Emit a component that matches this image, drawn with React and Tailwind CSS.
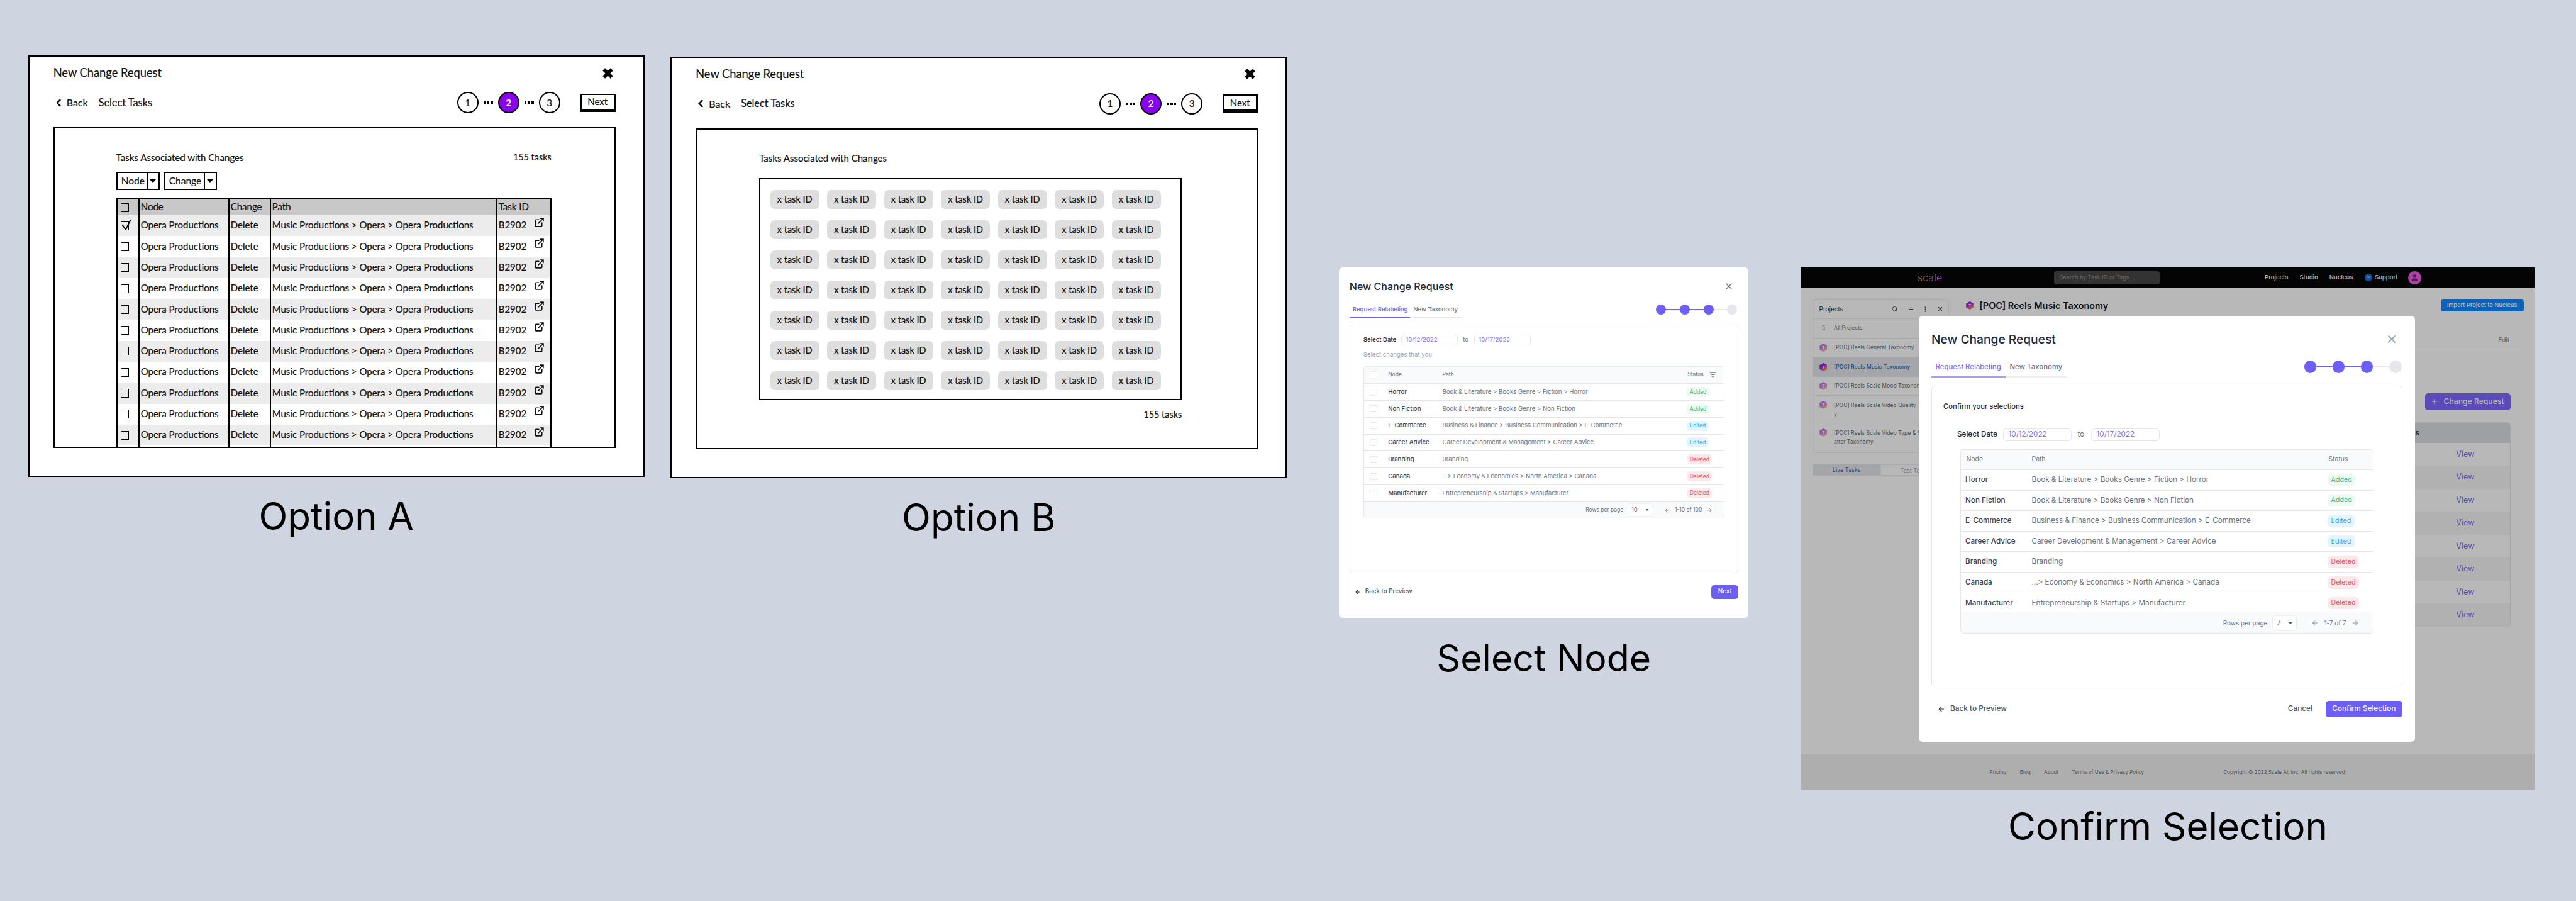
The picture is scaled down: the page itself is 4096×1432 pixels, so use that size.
import React from "react";
import { ArrowLeft, ArrowRight, ExternalLink, ListFilter, MoreVertical, Plus, Search, User, X } from "lucide-react";

const chips = Array.from({ length: 49 }, (_, i) => i);
const wireRows = Array.from({ length: 11 }, (_, i) => i);
const changes = [
  ["Horror", "Book & Literature > Books Genre > Fiction > Horror", "Added"],
  ["Non Fiction", "Book & Literature > Books Genre > Non Fiction", "Added"],
  ["E-Commerce", "Business & Finance > Business Communication > E-Commerce", "Edited"],
  ["Career Advice", "Career Development & Management > Career Advice", "Edited"],
  ["Branding", "Branding", "Deleted"],
  ["Canada", "...> Economy & Economics > North America > Canada", "Deleted"],
  ["Manufacturer", "Entrepreneurship & Startups > Manufacturer", "Deleted"],
];
const badgeColors = {
  Added: "bg-[#edf9f1] text-[#52b27e]",
  Edited: "bg-[#e2f5fe] text-[#38a8ea]",
  Deleted: "bg-[#fde8ea] text-[#ee4f62]",
};

function WireDots() {
  return (
    <span className="flex w-[15px] gap-[2px]">
      <span className="h-[4px] w-[4px] bg-black" />
      <span className="h-[4px] w-[4px] bg-black" />
      <span className="h-[4px] w-[4px] bg-black" />
    </span>
  );
}

function WireStep({ n, on }) {
  return (
    <span className={on
      ? "flex h-[34px] w-[34px] items-center justify-center rounded-full border-2 border-black bg-[#8a00f0] text-[15px] font-bold text-white [-webkit-text-stroke:0]"
      : "flex h-[34px] w-[34px] items-center justify-center rounded-full border-2 border-black bg-white text-[15px]"}>
      {n}
    </span>
  );
}

function WireHeader() {
  return (
    <>
      <div className="flex h-6 items-center justify-between pt-0">
        <span className="text-[18.3px]">New Change Request</span>
        <svg viewBox="0 0 24 24" className="mr-[3px] h-[19px] w-[19px]" fill="none" stroke="black" strokeWidth="7">
          <path d="M4 4 20 20M20 4 4 20" />
        </svg>
      </div>
      <div className="mt-[17px] flex h-9 items-center">
        <svg viewBox="0 0 10 16" className="ml-1 h-[17px] w-[9px]" fill="none" stroke="black" strokeWidth="2.6">
          <path d="M8 2 2 8l6 6" />
        </svg>
        <span className="ml-[8px] text-[16px]">Back</span>
        <span className="ml-[17px] text-[16.3px]">Select Tasks</span>
        <div className="ml-auto flex items-center gap-[8px]">
          <WireStep n="1" />
          <WireDots />
          <WireStep n="2" on />
          <WireDots />
          <WireStep n="3" />
        </div>
        <span className="ml-[32px] flex h-[29px] w-[56px] items-center justify-center border-2 border-r-[3px] border-b-[5px] border-black text-[15px]">Next</span>
      </div>
    </>
  );
}

function WireFrame({ children }) {
  return (
    <div className="flex h-[670px] w-[980px] flex-col border-2 border-black bg-white pt-[14px] pr-[44px] pl-[38px] font-[Lato,sans-serif] text-[#111] [-webkit-text-stroke:0.2px_#111]">
      <WireHeader />
      <div className="mt-[21px] flex h-[510px] flex-col border-2 border-black">{children}</div>
    </div>
  );
}

function WireCheck({ checked }) {
  return (
    <span className="relative h-[14px] w-[13px] border-[1.5px] border-black">
      {checked && (
        <svg viewBox="0 0 16 16" className="absolute -top-[5px] -left-[1px] h-[18px] w-[18px]" fill="none" stroke="black" strokeWidth="1.8">
          <path d="M2 8l5 7 7-14" />
        </svg>
      )}
    </span>
  );
}

function OptionA() {
  return (
    <WireFrame>
      <div className="flex min-h-0 flex-1 flex-col pt-[36px] pl-[98px]">
        <div className="flex h-5 w-[692px] items-center justify-between text-[15px]">
          <span>Tasks Associated with Changes</span>
          <span className="text-[14.4px]">155 tasks</span>
        </div>
        <div className="mt-[13px] flex gap-[7px] text-[15.5px]">
          <div className="flex h-[29px] w-[69px] border-2 border-black">
            <span className="flex-1 pl-[6px] leading-[25px]">Node</span>
            <span className="flex w-[19px] items-center justify-center border-l-2 border-black">
              <span className="border-x-[5px] border-t-[6px] border-x-transparent border-t-black" />
            </span>
          </div>
          <div className="flex h-[29px] w-[84px] border-2 border-black">
            <span className="flex-1 pl-[6px] leading-[25px]">Change</span>
            <span className="flex w-[19px] items-center justify-center border-l-2 border-black">
              <span className="border-x-[5px] border-t-[6px] border-x-transparent border-t-black" />
            </span>
          </div>
        </div>
        <div className="mt-[13px] flex w-[692px] flex-1 flex-col border-x-2 border-t-2 border-black text-[15px]">
          <div className="grid h-[25px] grid-cols-[35px_143px_66px_360px_1fr] bg-[#c8c8c8]">
            <div className="flex items-center border-r-2 border-black pl-[5px]"><WireCheck /></div>
            <div className="border-r-2 border-black pl-[2px] leading-[23px]">Node</div>
            <div className="border-r-2 border-black pl-[2px] leading-[23px]">Change</div>
            <div className="border-r-2 border-black pl-[2px] leading-[23px]">Path</div>
            <div className="pl-[2px] leading-[23px]">Task ID</div>
          </div>
          {wireRows.map((i) => (
            <div key={i} className={i % 2 === 0
              ? "grid h-[33.3px] grid-cols-[35px_143px_66px_360px_1fr] bg-[#ececec]"
              : "grid h-[33.3px] grid-cols-[35px_143px_66px_360px_1fr] bg-white"}>
              <div className="flex items-center border-r-2 border-black pl-[5px]"><WireCheck checked={i === 0} /></div>
              <div className="flex items-center border-r-2 border-black pb-[2px] pl-[2px]">Opera Productions</div>
              <div className="flex items-center border-r-2 border-black pb-[2px] pl-[2px]">Delete</div>
              <div className="flex items-center border-r-2 border-black pb-[2px] pl-[2px]">Music Productions &gt; Opera &gt; Opera Productions</div>
              <div className="flex items-center justify-between pr-[9px] pb-[2px] pl-[2px]">
                <span>B2902</span>
                <ExternalLink className="mb-[9px] h-[17px] w-[17px]" strokeWidth={2.4} />
              </div>
            </div>
          ))}
          <div className="grid flex-1 grid-cols-[35px_143px_66px_360px_1fr]">
            <div className="border-r-2 border-black" />
            <div className="border-r-2 border-black" />
            <div className="border-r-2 border-black" />
            <div className="border-r-2 border-black" />
            <div />
          </div>
        </div>
      </div>
    </WireFrame>
  );
}

function OptionB() {
  return (
    <WireFrame>
      <div className="flex flex-col pt-[36px] pl-[99px]">
        <div className="flex h-5 items-center text-[15px]">Tasks Associated with Changes</div>
        <div className="mt-[21px] grid h-[353px] w-[672px] grid-cols-[repeat(7,78px)] content-start gap-x-[12.5px] gap-y-[18px] border-2 border-black pt-[17.5px] pl-[15.5px]">
          {chips.map((i) => (
            <span key={i} className="flex h-[30px] items-center justify-center rounded-[7px] bg-[#dedede] text-[14.5px]">x task ID</span>
          ))}
        </div>
        <div className="mt-[13px] flex h-5 w-[672px] items-center justify-end text-[14.4px]">155 tasks</div>
      </div>
    </WireFrame>
  );
}

function Stepper({ dot, line, className }) {
  return (
    <div className={className}>
      <span className={`${dot} bg-[#6c5ef7]`} />
      <span className={`${line} bg-[#6c5ef7]`} />
      <span className={`${dot} bg-[#6c5ef7]`} />
      <span className={`${line} bg-[#6c5ef7]`} />
      <span className={`${dot} bg-[#6c5ef7]`} />
      <span className={`${line} bg-[#e5e7eb]`} />
      <span className={`${dot} bg-[#e5e7eb]`} />
    </div>
  );
}

function SelectNode() {
  return (
    <div className="flex h-[557px] w-[651px] flex-col rounded-[6px] bg-white pt-[18px] pr-[16px] pl-[16.5px] font-[Inter,sans-serif]">
      <div className="flex h-6 items-center justify-between">
        <span className="text-[16px] font-medium text-[#1f2937]">New Change Request</span>
        <X className="mr-[7px] h-[16px] w-[16px] text-[#6b7280]" strokeWidth={2} />
      </div>
      <div className="mt-[13.5px] flex items-center justify-between">
        <div className="flex h-[24px] text-[9.6px] font-medium">
          <span className="w-[96px] border-b-[1.5px] border-[#6c5ef7] pl-[5px] leading-[22px] text-[#6c5ef7]">Request Relabeling</span>
          <span className="w-[81px] border-b-[1.5px] border-[#e5e7eb] pl-[5.5px] leading-[22px] text-[#6b7280]">New Taxonomy</span>
        </div>
        <Stepper className="mr-[2px] mb-[2px] flex items-center" dot="h-4 w-4 rounded-full" line="h-[2px] w-[21.7px]" />
      </div>
      <div className="mt-[11.5px] h-[394.5px] rounded-[6px] border border-[#e5e7eb] pt-[15px] pr-[21px] pl-[21px]">
        <div className="flex h-[16.5px] items-center text-[9.6px]">
          <span className="w-[60.5px] font-medium text-[#1f2937]">Select Date</span>
          <span className="flex h-[16.5px] w-[90px] items-center rounded-[4px] border border-[#e5e7eb] pl-[6px] text-[#7f74f0]">10/12/2022</span>
          <span className="ml-[8px] w-[18px] text-[#6b7280]">to</span>
          <span className="flex h-[16.5px] w-[89.5px] items-center rounded-[4px] border border-[#e5e7eb] pl-[6px] text-[#7f74f0]">10/17/2022</span>
        </div>
        <div className="mt-[7px] h-4 text-[9.6px] leading-4 text-[#9ca3af]">Select changes that you</div>
        <div className="mt-[10px] overflow-hidden rounded-[4px] border border-[#e5e7eb] text-[9.6px]">
          <div className="grid h-[26.7px] grid-cols-[38.4px_86.3px_388.8px_1fr] items-center bg-[#f9fafb] text-[8.5px] text-[#6b7280]">
            <span className="ml-[9px] h-[11px] w-[12px] rounded-[2px] border border-[#e5e7eb] bg-white" />
            <span>Node</span>
            <span>Path</span>
            <span className="flex items-center pl-[1px]">Status<ListFilter className="ml-[9px] h-[11px] w-[11px]" strokeWidth={2} /></span>
          </div>
          {changes.map(([node, path, status]) => (
            <div key={node} className="grid h-[26.8px] grid-cols-[38.4px_86.3px_388.8px_1fr] items-center border-t border-[#e5e7eb] bg-white">
              <span className="ml-[9px] h-[11px] w-[12px] rounded-[2px] border border-[#e5e7eb]" />
              <span className="font-medium text-[#374151]">{node}</span>
              <span className="text-[#6b7280]">{path}</span>
              <span><span className={`inline-flex h-[16px] items-center rounded-[6px] px-[4.6px] text-[8.5px] ${badgeColors[status]}`}>{status}</span></span>
            </div>
          ))}
          <div className="flex h-[26.7px] items-center justify-end border-t border-[#e5e7eb] bg-[#f9fafb] pr-[18px] text-[8.5px] text-[#6b7280]">
            <span>Rows per page</span>
            <span className="ml-[6.6px] flex h-[21px] w-[39px] items-center justify-between rounded-[4px] border border-[#eceef1] bg-white px-[5px] text-[9.6px]">10<span className="border-x-[2.5px] border-t-[3px] border-x-transparent border-t-[#4b5563]" /></span>
            <ArrowLeft className="ml-[19px] h-[10px] w-[10px]" strokeWidth={1.6} />
            <span className="mx-[7px]">1-10 of 100</span>
            <ArrowRight className="h-[10px] w-[10px]" strokeWidth={1.6} />
          </div>
        </div>
      </div>
      <div className="mt-[19px] flex items-center justify-between">
        <span className="flex items-center pl-[8px] text-[9.8px] font-medium text-[#4b5563]">
          <ArrowLeft className="mr-[7px] h-[10px] w-[10px] text-[#1f2937]" strokeWidth={2.4} />Back to Preview
        </span>
        <span className="flex h-[22px] w-[43px] items-center justify-center rounded-[5px] bg-[#6c5ef7] text-[9.8px] font-medium text-white">Next</span>
      </div>
    </div>
  );
}

function Hex({ bright, id }) {
  return (
    <svg viewBox="0 0 24 26" className={bright ? "h-[13px] w-[12.5px] shrink-0" : "h-[13px] w-[12.5px] shrink-0 opacity-60"}>
      <defs>
        <linearGradient id={id} x1="0" y1="0" x2="0.6" y2="1">
          <stop offset="0" stopColor="#5a22e8" />
          <stop offset="0.55" stopColor="#b02fd8" />
          <stop offset="1" stopColor="#f59a3c" />
        </linearGradient>
      </defs>
      <polygon points="12,0 24,6.5 24,19.5 12,26 0,19.5 0,6.5" fill={`url(#${id})`} />
      <text x="12" y="18" textAnchor="middle" fontSize="13" fontWeight="700" fill="#fff" fontFamily="Inter">T</text>
    </svg>
  );
}

function Sidebar() {
  return (
    <div className="w-[216.5px] shrink-0 text-[8.6px]">
      <div className="rounded-[4px] border border-[#eceef1] bg-white text-[#6b7280]">
        <div className="flex h-[30.6px] items-center border-b border-[#eceef1] pr-[8px] pl-[9.5px] text-[10px] text-[#1f2937]">
          <span>Projects</span>
          <Search className="ml-auto h-[10px] w-[10px] text-[#4b5563]" strokeWidth={2.4} />
          <Plus className="ml-[15px] h-[11px] w-[11px] text-[#4b5563]" strokeWidth={2.4} />
          <MoreVertical className="ml-[12px] h-[11px] w-[11px] text-[#4b5563]" strokeWidth={2.8} />
          <X className="ml-[13px] h-[10px] w-[10px] text-[#4b5563]" strokeWidth={3} />
        </div>
        <div className="flex h-[30.6px] items-center border-b border-[#eceef1] pl-[14px]">
          <span className="w-[19px] text-[#9ca3af]">5</span>All Projects
        </div>
        <div className="flex h-[30.6px] items-center gap-[11px] border-b border-[#eceef1] pl-[9.5px]">
          <Hex id="hx1" />[POC] Reels General Taxonomy
        </div>
        <div className="flex h-[30.6px] items-center gap-[11px] bg-[#e5e7eb] pl-[9.5px] font-medium text-[#1f6fd8]">
          <Hex id="hx2" bright />[POC] Reels Music Taxonomy
        </div>
        <div className="flex h-[30.6px] items-center gap-[11px] border-b border-[#eceef1] pl-[9.5px]">
          <Hex id="hx3" />[POC] Reels Scale Mood Taxonomy
        </div>
        <div className="flex h-[44px] items-start gap-[11px] border-b border-[#eceef1] pt-[8px] pl-[9.5px] leading-[14px]">
          <Hex id="hx4" /><span>[POC] Reels Scale Video Quality Taxonom<br />y</span>
        </div>
        <div className="flex h-[46px] items-start gap-[11px] pt-[8px] pl-[9.5px] leading-[14px]">
          <Hex id="hx5" /><span>[POC] Reels Scale Video Type &amp; Subject M<br />atter Taxonomy</span>
        </div>
      </div>
      <div className="mt-[18px] flex h-[18px] text-[9px] leading-[18px]">
        <span className="w-1/2 rounded-l-[3px] bg-[#e5e7eb] text-center text-[#1f6fd8]">Live Tasks</span>
        <span className="w-1/2 rounded-r-[3px] border border-[#eceef1] text-center text-[#9ca3af]">Test Tasks</span>
      </div>
    </div>
  );
}

function ProjectMain() {
  return (
    <div className="ml-[27.5px] flex min-w-0 flex-1 flex-col pr-[18px]">
      <div className="flex h-[19.6px] items-center justify-between">
        <span className="flex items-center gap-[9px] text-[14.4px] font-semibold text-[#111827]">
          <Hex id="hx6" bright />[POC] Reels Music Taxonomy
        </span>
        <span className="flex h-[19.6px] w-[132px] items-center justify-center rounded-[4px] bg-[#0e8aff] text-[9.2px] font-medium text-white">Import Project to Nucleus</span>
      </div>
      <div className="mr-[3px] flex h-[62px] items-end justify-end border-b border-[#e5e7eb] pr-[19.5px] pb-[8px] text-[10px] text-[#6b7280]">Edit</div>
      <span className="mt-[68px] mr-[21px] flex h-[26.7px] w-[136px] items-center justify-center gap-[8px] self-end rounded-[5px] bg-[#7e68ff] text-[12.2px] font-medium text-white">
        <Plus className="h-[12px] w-[12px]" strokeWidth={2.4} />Change Request
      </span>
      <div className="mt-[19px] mr-[21px] overflow-hidden rounded-[6px] border border-[#e5e7eb] text-[12.6px]">
        <div className="grid h-[32px] grid-cols-[720px_1fr] items-center bg-[#dcdee2] text-[#1f2937]">
          <span className="text-right text-[12px] font-medium">Actions</span>
          <span />
        </div>
        {wireRows.slice(0, 8).map((i) => (
          <div key={i} className={i % 2 === 0
            ? "flex h-[36.5px] items-center justify-end bg-white pr-[56px] text-[#7c6ff5]"
            : "flex h-[36.5px] items-center justify-end bg-[#f6f6f6] pr-[56px] text-[#7c6ff5]"}>View</div>
        ))}
      </div>
    </div>
  );
}

function ConfirmModal() {
  return (
    <div className="absolute top-[77px] left-[187px] flex h-[676.5px] w-[789px] flex-col rounded-[6px] bg-white pt-[23px] pr-[19.5px] pl-[20.5px]">
      <div className="flex h-7 items-center justify-between">
        <span className="text-[19.2px] font-medium text-[#1f2937]">New Change Request</span>
        <X className="mr-[7px] h-[20px] w-[20px] text-[#9ca3af]" strokeWidth={2.2} />
      </div>
      <div className="mt-[15px] flex items-center justify-between">
        <div className="flex h-[31.5px] text-[11.4px] font-medium">
          <span className="w-[118px] border-b-2 border-[#ab9fe6] pl-[6.5px] leading-[30px] text-[#7c6ff0]">Request Relabeling</span>
          <span className="w-[97px] border-b-2 border-[#eeeeef] pl-[6.5px] leading-[30px] text-[#6b7280]">New Taxonomy</span>
        </div>
        <Stepper className="mr-[1.5px] mb-[2px] flex items-center" dot="h-[19.6px] w-[19.6px] rounded-full" line="h-[2px] w-[25.5px]" />
      </div>
      <div className="mt-[13.5px] h-[477.5px] rounded-[6px] border border-[#e5e7eb] pt-[24px]">
        <div className="h-4 pl-[18px] text-[11.2px] leading-4 font-medium text-[#1f2937]">Confirm your selections</div>
        <div className="mt-[27px] flex h-[19.6px] items-center pl-[40px] text-[11.7px]">
          <span className="w-[72.5px] font-medium text-[#1f2937]">Select Date</span>
          <span className="flex h-[19.6px] w-[109px] items-center rounded-[5px] border border-[#e5e7eb] pl-[8px] text-[#7f74f0]">10/12/2022</span>
          <span className="ml-[10px] w-[21px] text-[#6b7280]">to</span>
          <span className="flex h-[19.6px] w-[109px] items-center rounded-[5px] border border-[#e5e7eb] pl-[8px] text-[#7f74f0]">10/17/2022</span>
        </div>
        <div className="mt-[13px] ml-[45px] w-[657px] overflow-hidden rounded-[5px] border border-[#e5e7eb] text-[11.7px]">
          <div className="grid h-[31.4px] grid-cols-[112.5px_470.5px_1fr] items-center bg-[#f9fafb] pl-[8.5px] text-[10.4px] text-[#6b7280]">
            <span>Node</span>
            <span className="-ml-[8.5px]">Path</span>
            <span className="-ml-[7px]">Status</span>
          </div>
          {changes.map(([node, path, status]) => (
            <div key={node} className="grid h-[32.6px] grid-cols-[112.5px_470.5px_1fr] items-center border-t border-[#e5e7eb] bg-white pl-[7px]">
              <span className="font-medium text-[#374151]">{node}</span>
              <span className="-ml-[7px] text-[#6b7280]">{path}</span>
              <span className="-ml-[7px]"><span className={`inline-flex h-[19.6px] items-center rounded-[7px] px-[5.5px] text-[10.7px] ${badgeColors[status]}`}>{status}</span></span>
            </div>
          ))}
          <div className="flex h-[31.4px] items-center justify-end border-t border-[#e5e7eb] bg-[#f9fafb] pr-[22px] text-[10px] text-[#6b7280]">
            <span>Rows per page</span>
            <span className="ml-[7.5px] flex h-[25px] w-[39px] items-center justify-between rounded-[5px] border border-[#eceef1] bg-white px-[6px] text-[11.7px]">7<span className="border-x-[3px] border-t-[3.5px] border-x-transparent border-t-[#4b5563]" /></span>
            <ArrowLeft className="ml-[23px] h-[12px] w-[12px]" strokeWidth={1.6} />
            <span className="mx-[8.5px]">1-7 of 7</span>
            <ArrowRight className="h-[12px] w-[12px]" strokeWidth={1.6} />
          </div>
        </div>
      </div>
      <div className="mt-[23px] flex items-center justify-between">
        <span className="flex items-center pl-[10px] text-[11.8px] font-medium text-[#4b5563]">
          <ArrowLeft className="mr-[8px] h-[12px] w-[12px] text-[#1f2937]" strokeWidth={2.4} />Back to Preview
        </span>
        <span className="flex items-center gap-[20.5px] text-[11.8px] font-medium">
          <span className="text-[#4b5563]">Cancel</span>
          <span className="flex h-[26.7px] w-[122.5px] items-center justify-center rounded-[5px] bg-[#6c5ef7] text-white">Confirm Selection</span>
        </span>
      </div>
    </div>
  );
}

function ConfirmSelection() {
  return (
    <div className="relative flex h-[831px] w-[1167px] flex-col overflow-hidden bg-white font-[Inter,sans-serif]">
      <div className="flex h-[32px] shrink-0 items-center bg-[#060606] pl-[185.5px] text-[9.6px] font-medium text-white">
        <span className="w-[42px] bg-gradient-to-r from-[#f4a261] to-[#a855f7] bg-clip-text text-[16px] leading-[24px] font-light text-transparent">scale</span>
        <span className="ml-[175px] flex h-[21px] w-[168px] items-center rounded-[4px] bg-[#474747] pl-[8.5px] text-[9px] font-normal text-[#8e8e8e]">Search by Task ID or Tags...</span>
        <span className="ml-[167px]">Projects</span>
        <span className="ml-[18px]">Studio</span>
        <span className="ml-[18px]">Nucleus</span>
        <span className="ml-[19px] flex h-[11.5px] w-[11.5px] items-center justify-center rounded-full bg-[#0e6fe8] text-[5px] font-normal">10</span>
        <span className="ml-[4px]">Support</span>
        <span className="ml-[16px] flex h-[21px] w-[21px] items-center justify-center rounded-full bg-[#f459ea]">
          <User className="h-[13px] w-[13px] text-[#6b2f68]" fill="currentColor" strokeWidth={2} />
        </span>
      </div>
      <div className="flex min-h-0 flex-1 pt-[18.5px] pl-[18.5px]">
        <Sidebar />
        <ProjectMain />
      </div>
      <div className="flex h-[57px] shrink-0 items-center bg-[#f2f2f2] pl-[300px] text-[8.1px] text-[#6b7280]">
        <span>Pricing</span>
        <span className="ml-[21.5px]">Blog</span>
        <span className="ml-[21.5px]">About</span>
        <span className="ml-[21.5px]">Terms of Use &amp; Privacy Policy</span>
        <span className="ml-[126px]">Copyright © 2022 Scale AI, Inc. All rights reserved.</span>
      </div>
      <div className="absolute inset-0 bg-black/[0.28]" />
      <ConfirmModal />
    </div>
  );
}

export default function App() {
  return (
    <div className="relative h-[1432px] w-[4096px] overflow-hidden bg-[#cfd5e0] font-[Inter,sans-serif] text-black">
      <section className="absolute top-[88px] left-[44.7px] flex flex-col items-center">
        <OptionA />
        <h2 className="mt-[32px] text-[60px] leading-none">Option A</h2>
      </section>
      <section className="absolute top-[89.5px] left-[1066.2px] flex flex-col items-center">
        <OptionB />
        <h2 className="mt-[32px] text-[60px] leading-none">Option B</h2>
      </section>
      <section className="absolute top-[425px] left-[2129.3px] flex flex-col items-center">
        <SelectNode />
        <h2 className="mt-[33.5px] text-[59px] leading-none">Select Node</h2>
      </section>
      <section className="absolute top-[425px] left-[2863.5px] flex flex-col items-center">
        <ConfirmSelection />
        <h2 className="mt-[26.5px] text-[60px] leading-none">Confirm Selection</h2>
      </section>
    </div>
  );
}
